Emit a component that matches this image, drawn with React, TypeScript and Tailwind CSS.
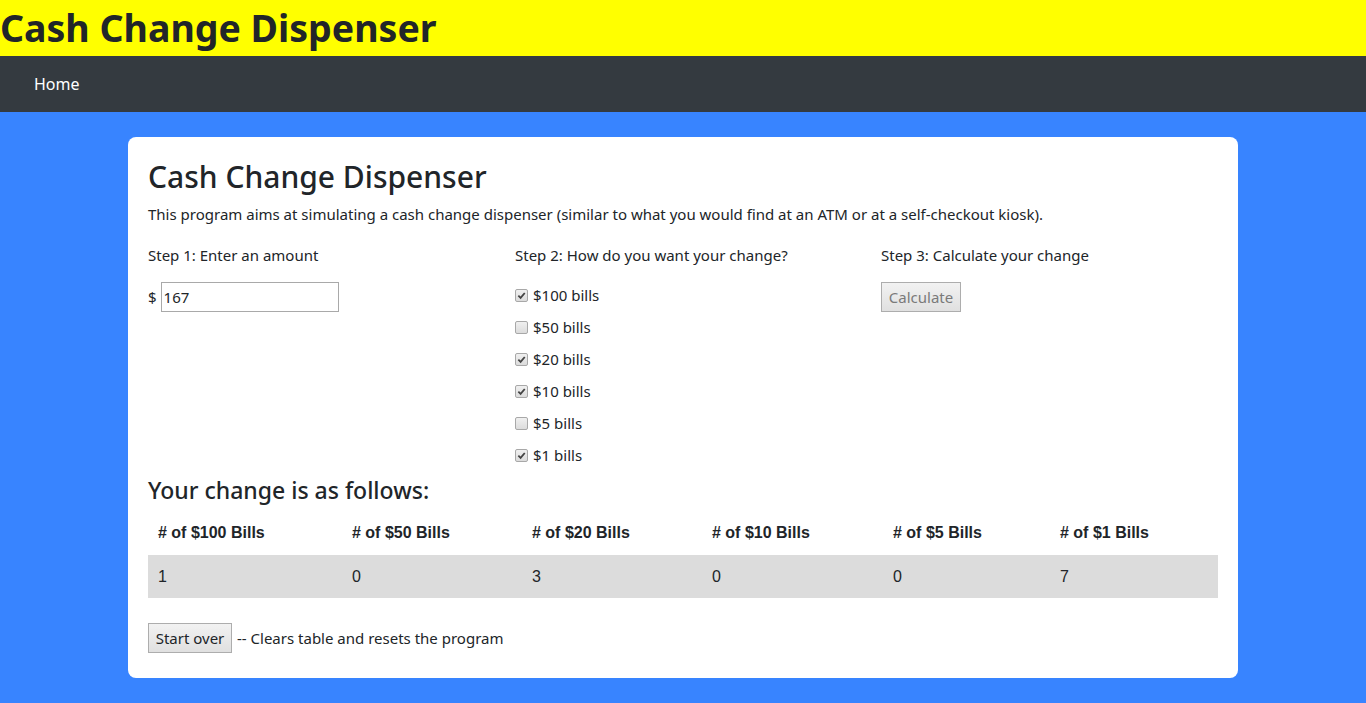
const bills = [
  { label: "$100 bills", checked: true },
  { label: "$50 bills", checked: false },
  { label: "$20 bills", checked: true },
  { label: "$10 bills", checked: true },
  { label: "$5 bills", checked: false },
  { label: "$1 bills", checked: true },
]

const results = [
  { head: "# of $100 Bills", count: 1 },
  { head: "# of $50 Bills", count: 0 },
  { head: "# of $20 Bills", count: 3 },
  { head: "# of $10 Bills", count: 0 },
  { head: "# of $5 Bills", count: 0 },
  { head: "# of $1 Bills", count: 7 },
]

function Box({ checked }: { checked: boolean }) {
  return (
    <span className="flex h-[13px] w-[13px] items-center justify-center rounded-[2px] border border-[#a8a8a8] bg-gradient-to-b from-[#f0f0f0] to-[#dcdcdc]">
      {checked && (
        <svg viewBox="0 0 10 10" className="h-[9px] w-[9px]">
          <path d="M1.5 5.2 L4 7.6 L8.6 2.2" fill="none" stroke="#444" strokeWidth="2" />
        </svg>
      )}
    </span>
  )
}

export default function App() {
  return (
    <div className="min-h-screen bg-[#3884ff] font-['Noto_Sans',sans-serif] text-[#212529]">
      <header className="flex h-14 items-center bg-[#ffff00]">
        <h1 className="text-[37.5px] font-bold leading-none">Cash Change Dispenser</h1>
      </header>
      <nav className="flex h-14 items-center bg-[#343a40] px-[34px]">
        <span className="text-base text-white">Home</span>
      </nav>

      <main className="mx-auto mt-[25px] w-[1110px] rounded-lg bg-white px-5 pb-[25px] pt-[18px]">
        <h2 className="text-[30px] font-medium leading-[44px]">Cash Change Dispenser</h2>
        <p className="mt-[3px] text-[15px] leading-6">
          This program aims at simulating a cash change dispenser (similar to what you would find at an ATM or at a self-checkout kiosk).
        </p>

        <div className="mt-[17px] grid grid-cols-[367px_366px_1fr] text-[15px]">
          <div>
            <p className="leading-6">Step 1: Enter an amount</p>
            <div className="mt-[15px] flex items-center gap-[4px]">
              <span>$</span>
              <div className="flex h-[30px] w-[178px] items-center border border-[#a9a9a9] px-[2px] text-[15px]">167</div>
            </div>
          </div>
          <div>
            <p className="leading-6">Step 2: How do you want your change?</p>
            <ul className="mt-[12px] flex flex-col">
              {bills.map((b) => (
                <li key={b.label} className="flex h-8 items-center gap-[5px]">
                  <Box checked={b.checked} />
                  <span>{b.label}</span>
                </li>
              ))}
            </ul>
          </div>
          <div>
            <p className="leading-6">Step 3: Calculate your change</p>
            <button className="mt-[15px] h-[30px] w-[80px] border border-[#adadad] bg-gradient-to-b from-[#f2f2f2] to-[#e0e0e0] text-[15px] text-[#7a7a7a]">
              Calculate
            </button>
          </div>
        </div>

        <h3 className="mt-[3px] text-[23px] font-medium leading-8">Your change is as follows:</h3>

        <table className="mt-[8px] w-full table-fixed font-['Liberation_Sans',sans-serif] text-base">
          <colgroup>
            <col className="w-[194px]" />
            <col className="w-[180px]" />
            <col className="w-[180px]" />
            <col className="w-[181px]" />
            <col className="w-[167px]" />
            <col />
          </colgroup>
          <thead>
            <tr className="h-[41px]">
              {results.map((r) => (
                <th key={r.head} className="px-[10px] pb-[4px] text-left font-bold">{r.head}</th>
              ))}
            </tr>
          </thead>
          <tbody>
            <tr className="h-[43px] bg-[#dcdcdc]">
              {results.map((r) => (
                <td key={r.head} className="px-[10px] text-left">{r.count}</td>
              ))}
            </tr>
          </tbody>
        </table>

        <div className="mt-[25px] flex items-center gap-[5px] text-[15px]">
          <button className="h-[30px] w-[84px] border border-[#adadad] bg-gradient-to-b from-[#f2f2f2] to-[#e0e0e0] text-[15px]">
            Start over
          </button>
          <span>-- Clears table and resets the program</span>
        </div>
      </main>
    </div>
  )
}
